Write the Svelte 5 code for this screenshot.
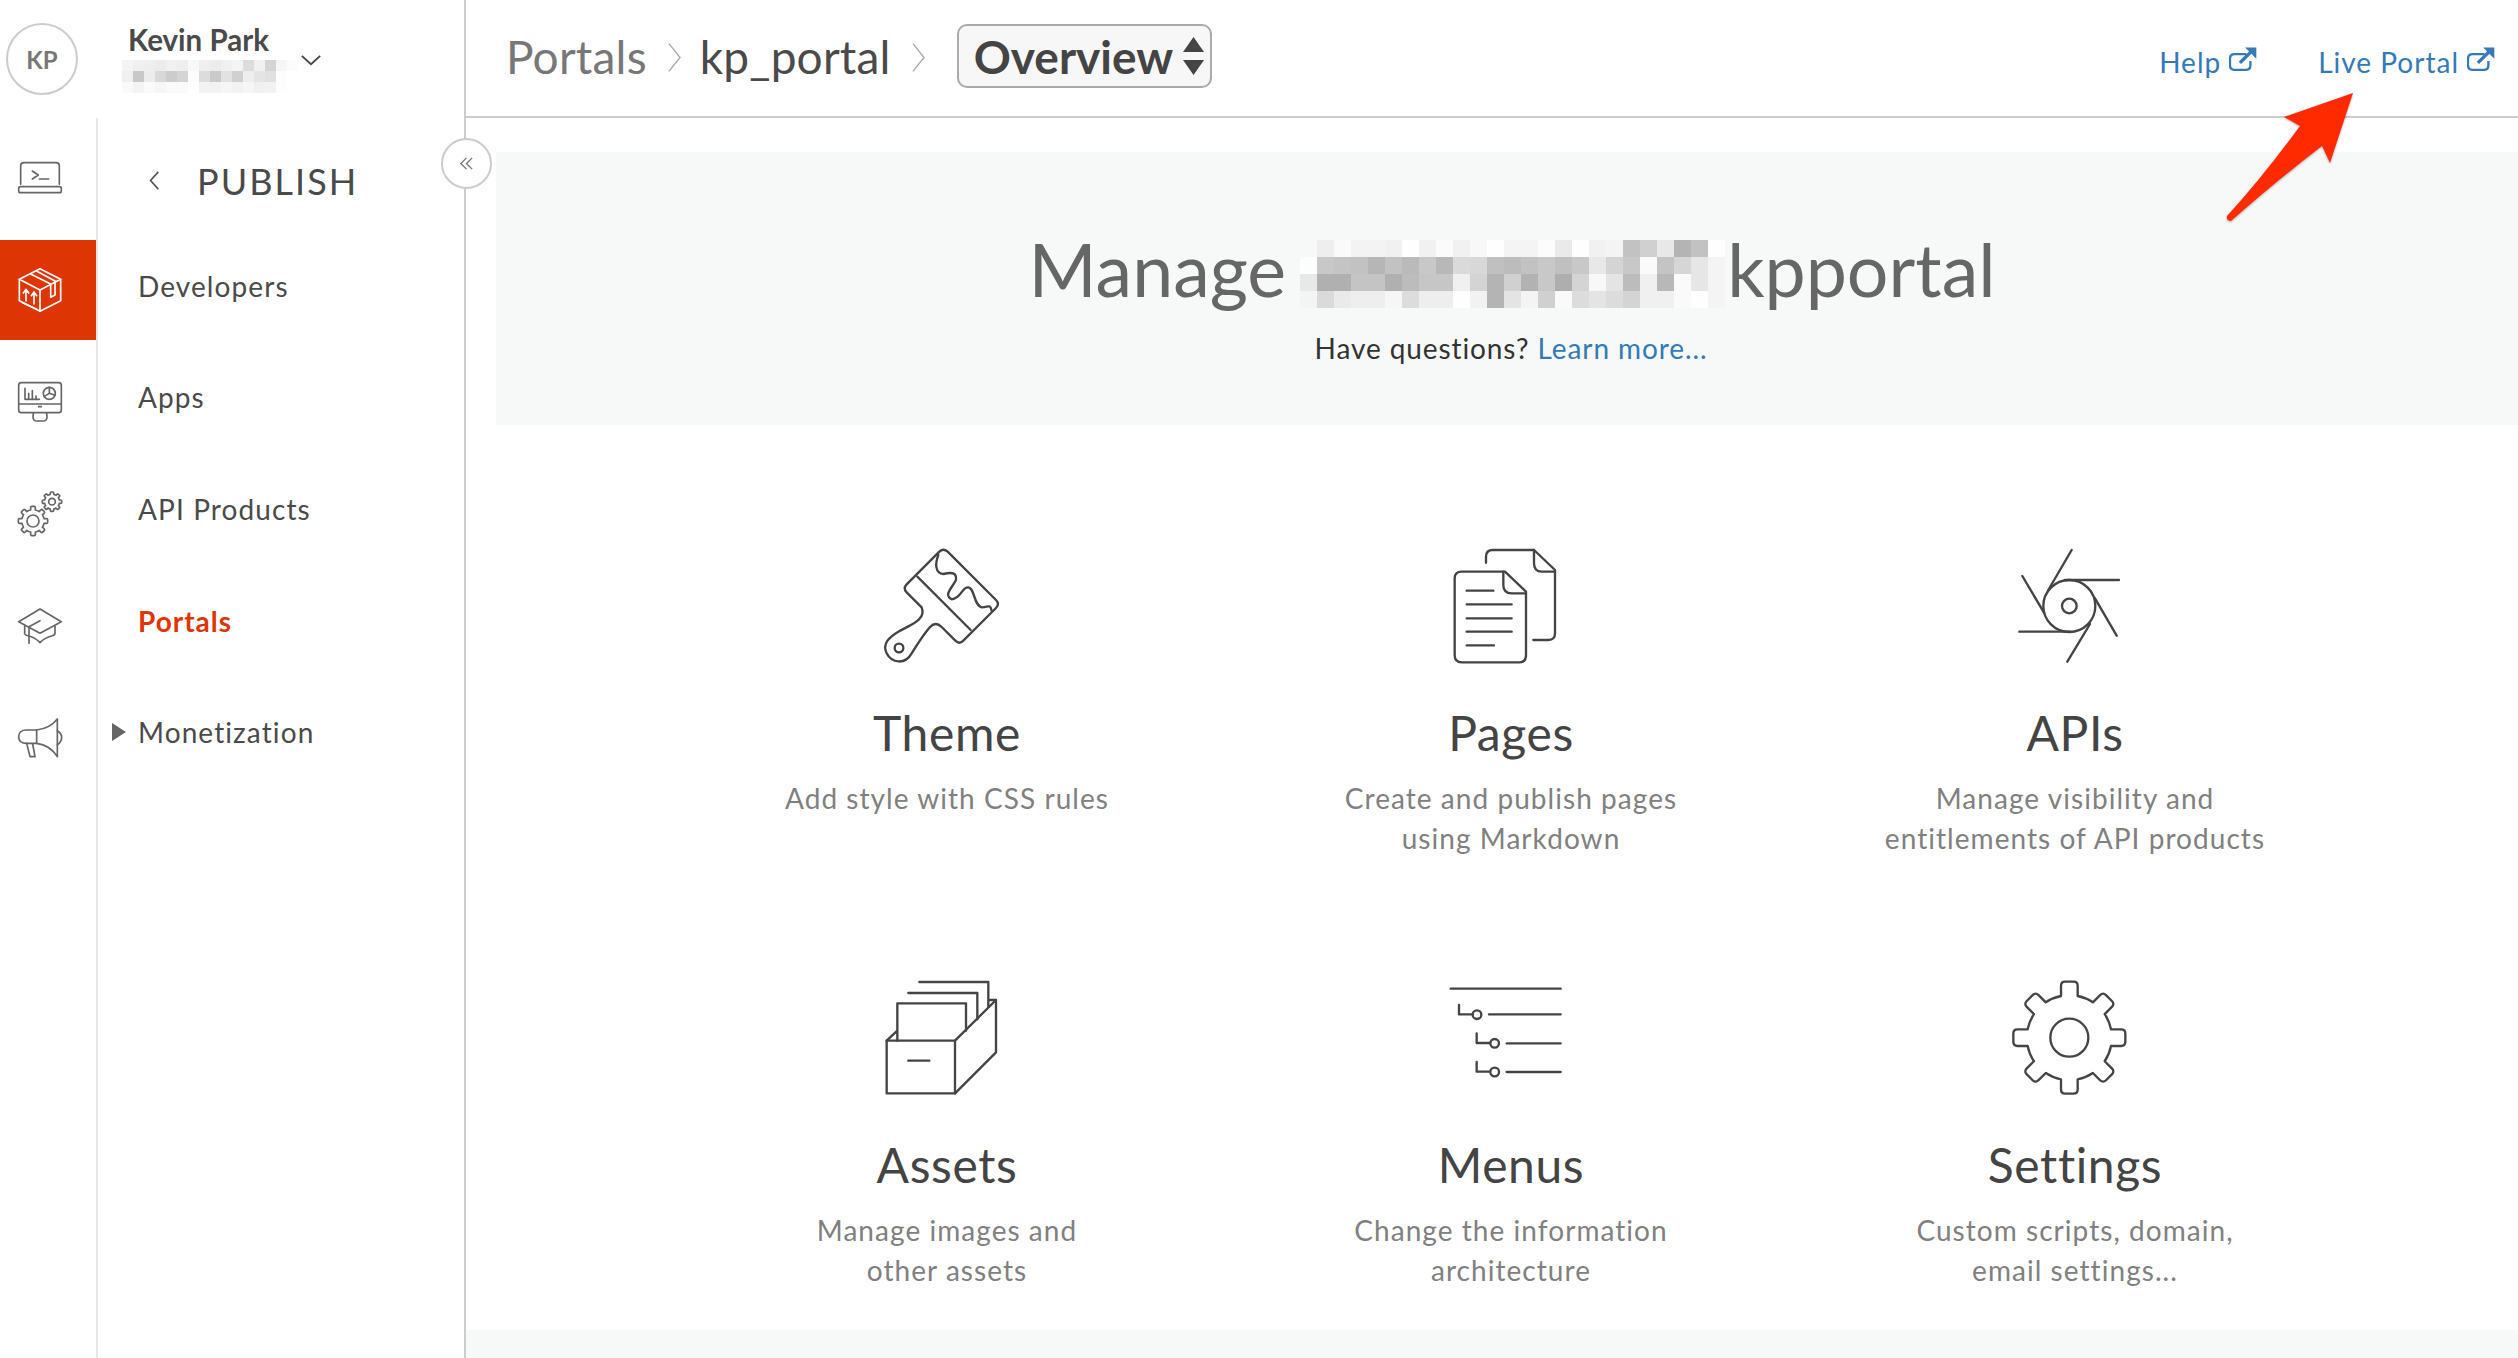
<script>
  const nameBlur = [
    'f4 f0 ee ec f0 ee f8 ee ec f0 f4 dd f0 d4 f6 fc',
    'f0 c8 ec d8 cc d4 fc dc ca e2 d0 ee e4 e0 fd ff',
    'fa f4 fa f6 fa fa ff f2 f2 f6 f2 f6 f0 f2 fd ff'
  ].map((r) => r.split(' '));
  const heroBlur = [
    'f8 ee fa f3 f3 f1 fe f1 fb f1 f8 fe f4 f4 fc ea fe f1 f4 c2 d0 e8 b4 c2 fe',
    'fd c8 c4 c2 b6 c2 ba c8 b8 da d8 c0 bc c2 c8 c0 c8 e8 d4 c8 fa c4 d6 e6 f4',
    'e8 b0 b0 c4 c4 b0 bc c6 c6 f0 d4 b4 d0 b2 c8 ae d4 f8 e4 bc f0 b8 fa e6 f4',
    'f4 da ea ee ee f6 dc ee ee fe f2 b4 e4 f4 d0 fa dc e4 dc d4 f0 f0 fa fe f4'
  ].map((r) => r.split(' '));

  function gear(cx, cy, ro, ri, hw, n) {
    const rnd = Math.min(hw * 0.5, (ro - ri) * 0.35);
    let d = '';
    const pt = (x, y, a) => {
      const c = Math.cos(a), s = Math.sin(a);
      return (cx + x * c - y * s).toFixed(1) + ' ' + (cy + x * s + y * c).toFixed(1);
    };
    for (let i = 0; i < n; i++) {
      const a = (i * 2 * Math.PI) / n;
      const start = pt(-hw, -ri, a);
      d += (i === 0 ? 'M' : 'A' + ri + ' ' + ri + ' 0 0 1 ') + start + ' ';
      d += 'L' + pt(-hw, -ro + rnd, a) + ' Q' + pt(-hw, -ro, a) + ' ' + pt(-hw + rnd, -ro, a) + ' ';
      d += 'L' + pt(hw - rnd, -ro, a) + ' Q' + pt(hw, -ro, a) + ' ' + pt(hw, -ro + rnd, a) + ' ';
      d += 'L' + pt(hw, -ri, a) + ' ';
    }
    d += 'A' + ri + ' ' + ri + ' 0 0 1 ' + pt(-hw, -ri, 0) + ' Z';
    return d;
  }

  const navItems = ['Developers', 'Apps', 'API Products', 'Portals', 'Monetization'];
</script>

{#snippet ext()}
  <svg class="ext" viewBox="385 84 85 72" aria-hidden="true">
    <path d="M438 105 H402 Q388 105 388 119 V139 Q388 153 402 153 H436 Q450 153 450 139 V126" fill="none" stroke="currentColor" stroke-width="7" />
    <path d="M418 132 L452 98" fill="none" stroke="currentColor" stroke-width="10" />
    <path d="M434 85 H468 V119 Z" fill="currentColor" />
  </svg>
{/snippet}

<div class="page">
  <aside class="side">
    <div class="user">
      <div class="avatar">KP</div>
      <div class="who">
        <div class="name">Kevin Park</div>
        <div class="blur name-blur">
          {#each nameBlur as row}
            <div class="blur-row">
              {#each row as c}<span style="background:#{c}{c.slice(0,2)}{c.slice(0,2)}"></span>{/each}
            </div>
          {/each}
        </div>
      </div>
      <svg class="caret" viewBox="0 0 24 14"><path d="M2 2 L12 11 L22 2" /></svg>
    </div>
    <div class="side-body">
      <div class="rail">
        <div class="rail-item">
          <svg viewBox="0 384 288 300"><g class="ri">
            <path d="M62 553 V498 Q62 488 72 488 H168 Q178 488 178 498 V553" />
            <rect x="56" y="560" width="128" height="18" rx="6" />
            <path d="M97 513 L115 525 L97 537 M118 537 H146" />
          </g></svg>
        </div>
        <div class="rail-item active">
          <svg viewBox="0 720 288 300"><g class="ri white">
            <path d="M120 806 L182 838 V902 L120 934 L58 902 V838 Z" />
            <path d="M58 838 L120 870 L182 838 M120 870 V934" />
            <path d="M92 822 L152 852 V892 L165 885 V843 L108 812" />
            <path d="M78 903 V870 M70 879 L78 868 L86 879 M102 912 V878 M94 887 L102 876 L110 887 M68 908 L110 928" />
          </g></svg>
        </div>
        <div class="rail-item">
          <svg viewBox="0 1056 288 300"><g class="ri">
            <rect x="56" y="1148" width="128" height="90" rx="8" />
            <path d="M56 1212 H184 M116 1220 H124" />
            <path d="M75 1165 V1198 H118 M86 1180 V1198 M97 1172 V1198 M108 1188 V1198" />
            <circle cx="148" cy="1180" r="18" />
            <path d="M148 1162 V1180 L132 1190 M148 1180 L165 1186" />
            <path d="M100 1240 Q96 1263 108 1263 H132 Q144 1263 140 1240" />
          </g></svg>
        </div>
        <div class="rail-item">
          <svg viewBox="0 132 288 300"><g class="ri">
            <path d={gear(99, 303, 44, 33, 7, 8)} />
            <circle cx="99" cy="303" r="18" />
            <path d={gear(156, 245, 29, 22, 5, 8)} />
            <circle cx="156" cy="245" r="10" />
          </g></svg>
        </div>
        <div class="rail-item">
          <svg viewBox="0 468 288 300"><g class="ri">
            <path d="M120 567 L184 605 L120 640 L56 605 Z" />
            <path d="M120 602 L87 620 V670" />
            <path d="M74 618 V642 Q76 646 87 648 Q105 652 120 668 Q135 652 155 648 Q165 646 165 640 V618" />
          </g></svg>
        </div>
        <div class="rail-item">
          <svg viewBox="0 804 288 300"><g class="ri">
            <path d="M110 930 H80 Q56 930 56 950 Q56 970 80 970 H110 Z" />
            <path d="M110 930 Q150 925 172 897 V1010 Q150 975 110 970" />
            <path d="M80 970 L90 1010 H105 L98 972" />
            <path d="M172 932 Q185 940 185 952 Q185 965 172 975" />
          </g></svg>
        </div>
      </div>
      <nav class="nav">
        <div class="nav-title">
          <svg class="back" viewBox="0 0 14 24"><path d="M12 2 L3 12 L12 22" /></svg>
          <span>PUBLISH</span>
        </div>
        {#each navItems as item}
          <div class="nav-item" class:current={item === 'Portals'}>
            <span class="tri-slot">
              {#if item === 'Monetization'}
                <svg viewBox="0 0 14 18"><path d="M0 0 L14 9 L0 18 Z" /></svg>
              {/if}
            </span>
            {item}
          </div>
        {/each}
      </nav>
    </div>
    <button class="collapse" aria-label="Collapse">
      <svg viewBox="0 0 16 16"><path d="M8 2 L2 8 L8 14 M14 2 L8 8 L14 14" /></svg>
    </button>
  </aside>

  <main class="main">
    <header class="top">
      <div class="crumb">
        <span class="c1">Portals</span>
        <svg class="sep" viewBox="0 0 14 32"><path d="M1 1 L13 16 L1 31" /></svg>
        <span class="c2">kp_portal</span>
        <svg class="sep" viewBox="0 0 14 32"><path d="M1 1 L13 16 L1 31" /></svg>
        <div class="select">
          <span>Overview</span>
          <svg viewBox="0 0 21 38"><path d="M10.5 0 L21 15 H0 Z M0 23 H21 L10.5 38 Z" /></svg>
        </div>
      </div>
      <div class="links">
        <span class="link">Help{@render ext()}</span>
        <span class="link">Live Portal{@render ext()}</span>
      </div>
    </header>

    <section class="hero">
      <h1>
        <span>Manage</span>
        <span class="blur hero-blur">
          {#each heroBlur as row}
            <span class="blur-row">
              {#each row as c}<span style="background:#{c}{c.slice(0,2)}{c.slice(0,2)}"></span>{/each}
            </span>
          {/each}
        </span>
        <span>kpportal</span>
      </h1>
      <p>Have questions? <span class="learn">Learn more...</span></p>
    </section>

    <section class="grid">
      <article class="card">
        <svg viewBox="-39 0 720 510" class="ico">
          <path d="M298 95 Q310 83 323 95 L468 240 Q480 252 468 264 L370 362 Q358 374 346 362 L305 321 Q287 303 270 321 C245 350 235 370 215 400 C195 435 155 430 140 400 C125 370 150 350 175 335 C210 315 260 300 245 262 L200 217 Q188 205 200 193 Z" />
          <path d="M232 170 L392 330" />
          <path d="M295 105 C285 130 285 160 310 162 C340 155 350 160 348 180 C335 205 310 225 335 238 C365 235 365 200 385 202 C405 205 400 255 425 262 C445 262 450 250 455 272" />
          <circle cx="177" cy="384" r="13" />
        </svg>
        <h2>Theme</h2>
        <p>Add style with CSS rules</p>
      </article>
      <article class="card">
        <svg viewBox="-87 -30 720 510" class="ico">
          <path d="M198 98 V80 Q198 60 218 60 H342 L405 120 V310 Q405 330 385 330 H340" />
          <path d="M342 60 V100 Q342 125 365 125 H405" />
          <path d="M125 125 H255 L318 185 V375 Q318 397 298 397 H125 Q104 397 104 375 V145 Q104 125 125 125 Z" />
          <path d="M250 125 V165 Q250 190 275 190 H318" />
          <path d="M140 182 H220 M140 223 H275 M140 265 H275 M140 305 H275 M140 346 H222" />
        </svg>
        <h2>Pages</h2>
        <p>Create and publish pages<br />using Markdown</p>
      </article>
      <article class="card">
        <svg viewBox="-75 -30 720 510" class="ico">
          <circle cx="268" cy="228" r="78" />
          <circle cx="268" cy="228" r="22" />
          <path d="M275 60 L205 180 M127 138 L192 248 M118 305 H270 M262 395 L330 282 M410 317 L345 205 M417 150 H255" />
        </svg>
        <h2>APIs</h2>
        <p>Manage visibility and<br />entitlements of API products</p>
      </article>
      <article class="card">
        <svg viewBox="-99 -24 720 510" class="ico">
          <path d="M80 242 H285 V400 H80 Z" />
          <path d="M285 242 L408 120 V277 L285 400" />
          <path d="M80 242 L112 212 M112 242 V130 H318 V212 M145 99 H352 V178 M178 66 H385 V140 M385 120 H408 M145 302 H208" />
        </svg>
        <h2>Assets</h2>
        <p>Manage images and<br />other assets</p>
      </article>
      <article class="card">
        <svg viewBox="-117 -54 720 510" class="ico">
          <path d="M62 56 H392 M87 105 V133 H128 M177 133 H392 M140 190 V219 H180 M230 220 H392 M140 276 V305 H180 M230 306 H392" />
          <circle cx="141" cy="134" r="13" />
          <circle cx="194" cy="220" r="13" />
          <circle cx="194" cy="306" r="13" />
        </svg>
        <h2>Menus</h2>
        <p>Change the information<br />architecture</p>
      </article>
      <article class="card">
        <svg viewBox="-105 -24 720 510" class="ico">
          <path d={gear(238, 233, 168, 125, 25, 8)} />
          <circle cx="238" cy="233" r="57" />
        </svg>
        <h2>Settings</h2>
        <p>Custom scripts, domain,<br />email settings...</p>
      </article>
    </section>
    <div class="band"></div>
  </main>

  <svg class="arrow" viewBox="2220 88 140 140">
    <path d="M2353 93 L2284 117 L2300 126 Q2262 178 2227 216 Q2226 221 2231 221 Q2280 178 2322 146 L2330 163 Z" />
  </svg>
</div>

<style>
  :global(body) { margin: 0; background: #fff; }
  .page {
    position: relative;
    display: flex;
    width: 2518px;
    height: 1358px;
    overflow: hidden;
    font-family: Lato, "Liberation Sans", sans-serif;
    color: #444;
  }
  .side {
    position: relative;
    flex: 0 0 466px;
    box-sizing: border-box;
    border-right: 2px solid #ccc;
    display: flex;
    flex-direction: column;
  }
  .user {
    height: 118px;
    display: flex;
    align-items: center;
    padding-left: 6px;
    flex: none;
  }
  .avatar {
    width: 72px;
    height: 72px;
    box-sizing: border-box;
    border: 2px solid #ccc;
    border-radius: 50%;
    display: flex;
    align-items: center;
    justify-content: center;
    font-size: 24px;
    font-weight: 700;
    color: #777;
  }
  .who { margin-left: 44px; margin-top: -6px; width: 176px; }
  .name { font-size: 29.5px; font-weight: 700; line-height: 34px; margin-left: 6px; color: #4a4a4a; white-space: nowrap; }
  .blur { display: block; }
  .blur-row { display: flex; }
  .blur-row span { display: block; }
  .name-blur { margin-top: 3px; margin-bottom: -4px; }
  .name-blur .blur-row span { width: 11px; height: 11px; }
  .caret { width: 22px; height: 13px; margin-left: 2px; margin-top: 3px; fill: none; stroke: #444; stroke-width: 2; }
  .side-body { flex: 1; display: flex; }
  .rail {
    flex: 0 0 98px;
    box-sizing: border-box;
    border-right: 2px solid #e8e8e8;
    padding-top: 10px;
    display: flex;
    flex-direction: column;
    gap: 12px;
  }
  .rail-item { height: 100px; display: block; }
  .rail-item svg { display: block; width: 96px; height: 100px; }
  .rail-item.active { background: #de3505; }
  .ri { fill: none; stroke: #666; stroke-width: 5; stroke-linejoin: round; stroke-linecap: round; }
  .ri.white { stroke: #fff; }
  .nav { flex: 1; padding-top: 12px; }
  .nav-title {
    height: 101px;
    display: flex;
    align-items: center;
    padding-left: 50px;
    font-size: 36px;
    letter-spacing: 2.05px;
    color: #4a4a4a;
  }
  .back { width: 12px; height: 21px; fill: none; stroke: #555; stroke-width: 2; margin-right: 37px; }
  .nav-item {
    height: 111.6px;
    display: flex;
    align-items: center;
    padding-left: 14px;
    font-size: 28px;
    letter-spacing: 1.1px;
    color: #4a4a4a;
    transform: translateY(-1px);
  }
  .nav-item.current { color: #de3505; font-weight: 700; letter-spacing: 1px; }
  .tri-slot { width: 26px; display: flex; flex: none; }
  .tri-slot svg { width: 14px; height: 18px; fill: #666; }
  .collapse {
    position: absolute;
    left: 441px;
    top: 138px;
    width: 51px;
    height: 51px;
    box-sizing: border-box;
    border: 2px solid #ccc;
    border-radius: 50%;
    background: #fff;
    padding: 0;
    display: flex;
    align-items: center;
    justify-content: center;
  }
  .collapse svg { width: 15px; height: 15px; fill: none; stroke: #777; stroke-width: 1.5; }

  .main { flex: 1; display: flex; flex-direction: column; min-width: 0; }
  .top {
    flex: none;
    height: 118px;
    box-sizing: border-box;
    border-bottom: 2px solid #ccc;
    display: flex;
    padding: 24px 23px 0 40px;
  }
  .crumb { display: flex; align-items: center; height: 64px; font-size: 46px; letter-spacing: 0.2px; }
  .c1 { color: #777; }
  .c2 { color: #4a4a4a; }
  .sep { width: 13px; height: 31px; margin: 2px 19px 0 21px; fill: none; stroke: #aaa; stroke-width: 1.5; }
  .select {
    width: 255px;
    height: 64px;
    box-sizing: border-box;
    margin-left: 13px;
    border: 2px solid #aaa;
    border-radius: 10px;
    background: #f7f7f7;
    display: flex;
    align-items: center;
    padding-left: 15px;
    font-weight: 700;
    font-size: 46px;
    letter-spacing: 0;
    color: #444;
  }
  .select svg { width: 21px; height: 38px; fill: #444; margin-left: 10px; }
  .links { margin-left: auto; display: flex; gap: 61px; color: #337ab7; font-size: 28px; letter-spacing: 1px; padding-top: 18px; align-items: flex-start; }
  .link { display: flex; align-items: flex-start; line-height: 40px; }
  .ext { width: 28px; height: 24px; margin-left: 8px; margin-top: 5px; color: #337ab7; }

  .hero {
    flex: none;
    margin: 34px 0 0 30px;
    height: 273px;
    box-sizing: border-box;
    background: #f7f9f9;
    padding: 78px 0 0 8px;
    text-align: center;
  }
  .hero h1 {
    margin: 0;
    padding-left: 2px;
    display: flex;
    justify-content: center;
    align-items: center;
    height: 76px;
    font-size: 73.5px;
    font-weight: 400;
    color: #666;
  }
  .hero-blur { margin: 12px 2px 0 14px; }
  .hero-blur .blur-row span { width: 17px; height: 17px; }
  .hero p { margin: 22px 0 0; font-size: 28px; letter-spacing: 0.9px; color: #333; line-height: 40px; }
  .learn { color: #337ab7; }

  .grid {
    flex: none;
    margin-top: 95px;
    padding-left: 199px;
    display: grid;
    grid-template-columns: repeat(3, 564px);
    grid-auto-rows: 338px;
    row-gap: 94px;
  }
  .card { text-align: center; }
  .ico { display: block; width: 240px; height: 170px; margin: 0 auto; fill: none; stroke: #444; stroke-width: 7; stroke-linecap: round; stroke-linejoin: round; }
  .card h2 { margin: 13px 0 15px; font-size: 48px; line-height: 60px; font-weight: 400; color: #444; letter-spacing: 0.6px; }
  .card p { margin: 0; font-size: 28px; line-height: 40px; letter-spacing: 1.05px; color: #808080; }
  .band { flex: 1; margin-top: 40px; background: #f7f9f9; }

  .arrow {
    position: absolute;
    left: 2220px;
    top: 88px;
    width: 140px;
    height: 140px;
    fill: #ff2a00;
    filter: drop-shadow(0 1px 1px rgba(0,0,0,.3));
  }
</style>
